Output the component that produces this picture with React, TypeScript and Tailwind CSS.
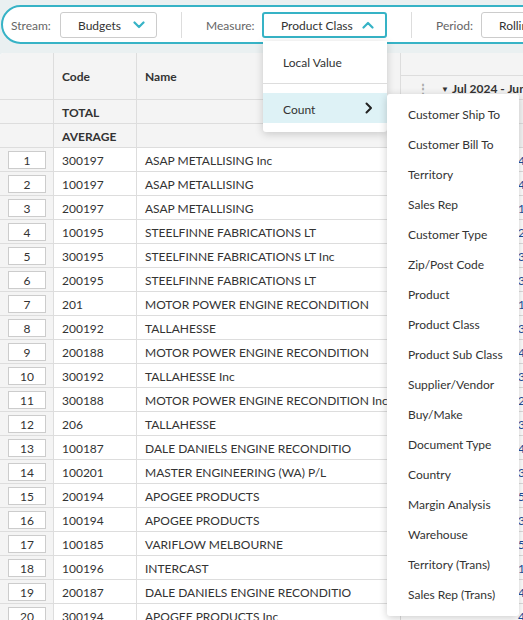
import React from "react";

const rows: [string, string, string][] = [
  ["300197", "ASAP METALLISING Inc", "4"],
  ["100197", "ASAP METALLISING", "4"],
  ["200197", "ASAP METALLISING", "1"],
  ["100195", "STEELFINNE FABRICATIONS LT", "2"],
  ["300195", "STEELFINNE FABRICATIONS LT Inc", "3"],
  ["200195", "STEELFINNE FABRICATIONS LT", "3"],
  ["201", "MOTOR POWER ENGINE RECONDITION", "1"],
  ["200192", "TALLAHESSE", "3"],
  ["200188", "MOTOR POWER ENGINE RECONDITION", "4"],
  ["300192", "TALLAHESSE Inc", "3"],
  ["300188", "MOTOR POWER ENGINE RECONDITION Inc", "2"],
  ["206", "TALLAHESSE", "3"],
  ["100187", "DALE DANIELS ENGINE RECONDITIO", "4"],
  ["100201", "MASTER ENGINEERING (WA) P/L", "3"],
  ["200194", "APOGEE PRODUCTS", "5"],
  ["100194", "APOGEE PRODUCTS", "3"],
  ["100185", "VARIFLOW MELBOURNE", "5"],
  ["100196", "INTERCAST", "1"],
  ["200187", "DALE DANIELS ENGINE RECONDITIO", "4"],
  ["300194", "APOGEE PRODUCTS Inc", "4"],
];

const subItems = [
  "Customer Ship To",
  "Customer Bill To",
  "Territory",
  "Sales Rep",
  "Customer Type",
  "Zip/Post Code",
  "Product",
  "Product Class",
  "Product Sub Class",
  "Supplier/Vendor",
  "Buy/Make",
  "Document Type",
  "Country",
  "Margin Analysis",
  "Warehouse",
  "Territory (Trans)",
  "Sales Rep (Trans)",
];

function ChevronDown() {
  return (
    <svg width="12" height="8" viewBox="0 0 12 8" fill="none">
      <path d="M1.5 1.5L6 6L10.5 1.5" stroke="#36b3c6" strokeWidth="2.2" strokeLinecap="round" strokeLinejoin="round" />
    </svg>
  );
}
function ChevronUp() {
  return (
    <svg width="12" height="8" viewBox="0 0 12 8" fill="none">
      <path d="M1.5 6.5L6 2L10.5 6.5" stroke="#36b3c6" strokeWidth="2.2" strokeLinecap="round" strokeLinejoin="round" />
    </svg>
  );
}

export default function App() {
  return (
    <div
      className="relative w-[523px] h-[620px] overflow-hidden bg-[#eaf0f1] text-[#333]"
      style={{ fontFamily: "Lato, 'Open Sans', sans-serif" }}
    >
      {/* Toolbar */}
      <div className="pt-[5px] pl-[1px]">
        <div className="flex items-center h-[39px] w-[600px] bg-white border-2 border-[#36b3c6] rounded-l-[20px] text-[12px] whitespace-nowrap">
          <span className="ml-[8px] pt-[2px] w-[49px] shrink-0 text-[#666]">Stream:</span>
          <div className="shrink-0 flex items-center justify-between w-[97px] h-[26px] border border-[#ccc] rounded-[3px] pl-[17px] pr-[11px]">
            <span className="pt-[2px]">Budgets</span>
            <ChevronDown />
          </div>
          <div className="shrink-0 ml-[24px] w-px h-[26px] bg-[#ddd]" />
          <span className="ml-[24px] pt-[2px] w-[56px] shrink-0 text-[#666]">Measure:</span>
          <div className="shrink-0 flex items-center justify-between w-[125px] h-[26px] border-2 border-[#36b3c6] rounded-[3px] pl-[17px] pr-[11px]">
            <span className="pt-[2px]">Product Class</span>
            <ChevronUp />
          </div>
          <div className="shrink-0 ml-[24px] w-px h-[26px] bg-[#ddd]" />
          <span className="ml-[24px] pt-[2px] w-[45px] shrink-0 text-[#666]">Period:</span>
          <div className="shrink-0 flex items-center w-[120px] h-[26px] border border-[#ccc] rounded-[3px] pl-[17px]">
            <span className="pt-[2px]">Rolling 12 Months</span>
          </div>
        </div>
      </div>

      {/* Grid */}
      <div className="mt-[9px] w-[560px] bg-white rounded-tl-[4px] overflow-hidden text-[12px]">
        {/* Header */}
        <div className="flex h-[47px] bg-[#f4f4f4] border-b border-[#ddd]">
          <div className="w-[54px] shrink-0 border-r border-[#ddd]" />
          <div className="w-[83px] shrink-0 border-r border-[#ddd] flex items-center pl-[8px] pt-[2px] font-bold">Code</div>
          <div className="w-[264px] shrink-0 border-r border-[#ddd] flex items-center pl-[8px] pt-[2px] font-bold">Name</div>
          <div className="w-[150px] shrink-0 flex flex-col">
            <div className="h-[23px] border-b border-[#ddd]" />
            <div className="flex-1 flex items-center pl-[16px] pt-[2px] font-bold">
              <span className="text-[#aaa] text-[12px] leading-none mr-[12px]">⋮</span>
              <span className="text-[8px] mr-[3px]">▼</span>
              <span className="whitespace-nowrap">Jul 2024 - June 2025</span>
            </div>
          </div>
        </div>
        {(["TOTAL", "AVERAGE"] as const).map((t) => (
          <div key={t} className="flex h-[24px] bg-[#f4f4f4] border-b border-[#ddd]">
            <div className="w-[54px] shrink-0 border-r border-[#ddd]" />
            <div className="w-[83px] shrink-0 border-r border-[#ddd] flex items-center pl-[8px] pt-[2px] font-bold">{t}</div>
            <div className="w-[264px] shrink-0 border-r border-[#ddd]" />
            <div className="w-[150px] shrink-0" />
          </div>
        ))}
        {rows.map(([code, name, v], i) => (
          <div key={i} className="flex h-[24px] border-b border-[#ddd]">
            <div className="w-[54px] shrink-0 border-r border-[#ddd] bg-[#f4f4f4] flex items-center pl-[8px] pt-[1px]">
              <div className="w-[38px] h-[18px] bg-white border border-[#ccc] flex items-center justify-center pt-[2px]">{i + 1}</div>
            </div>
            <div className="w-[83px] shrink-0 border-r border-[#ddd] flex items-center pl-[8px] pt-[2px]">{code}</div>
            <div className="w-[264px] shrink-0 border-r border-[#ddd] flex items-center pl-[8px] pt-[2px] overflow-hidden whitespace-nowrap">{name}</div>
            <div className="w-[150px] shrink-0 flex items-center pl-[117px] pt-[2px] text-[#1f4e9c] whitespace-nowrap">{v},532</div>
          </div>
        ))}
      </div>

      {/* Measure dropdown */}
      <div className="absolute left-[263px] top-[41px] w-[124px] h-[91px] bg-white rounded-b-[3px] shadow-[0_2px_8px_rgba(0,0,0,0.18)] text-[12px]">
        <div className="h-[43px] flex items-center pl-[20px] pt-[1px] border-b border-[#ddd]">Local Value</div>
        <div className="mt-[9px] h-[30px] bg-[#def2f6] flex items-center justify-between pl-[20px] pr-[14px]">
          <span className="pt-[3px]">Count</span>
          <svg width="8" height="12" viewBox="0 0 8 12" fill="none">
            <path d="M1.5 1.5L6 6L1.5 10.5" stroke="#222" strokeWidth="2" strokeLinecap="round" strokeLinejoin="round" />
          </svg>
        </div>
      </div>

      {/* Sub menu */}
      <div className="absolute left-[387px] top-[94px] w-[132px] h-[522px] bg-white rounded-[3px] shadow-[0_2px_8px_rgba(0,0,0,0.2)] pt-[6px] text-[12px]">
        {subItems.map((s) => (
          <div key={s} className="h-[30px] flex items-center pl-[21px] whitespace-nowrap">{s}</div>
        ))}
      </div>
    </div>
  );
}
